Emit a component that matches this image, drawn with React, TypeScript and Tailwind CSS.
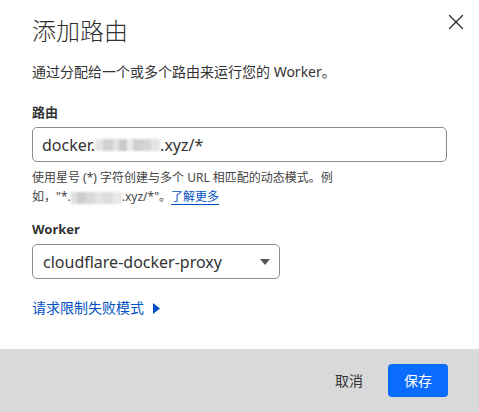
import { X } from 'lucide-react'

const font = { fontFamily: '"Noto Sans", "Noto Sans CJK SC", sans-serif' }

function Blur({ blocks }: { blocks: { w: number; c: string }[] }) {
  return (
    <span className="inline-flex align-middle h-[12px] blur-[1px]">
      {blocks.map((b, i) => (
        <span key={i} className="inline-block h-full" style={{ width: b.w, background: b.c }} />
      ))}
    </span>
  )
}

const inputBlur = [
  { w: 8, c: '#e6e6e6' },
  { w: 10, c: '#d0d0d0' },
  { w: 6, c: '#e2e2e2' },
  { w: 8, c: '#c9c9c9' },
  { w: 6, c: '#ececec' },
  { w: 10, c: '#cfcfcf' },
  { w: 8, c: '#d6d6d6' },
  { w: 9, c: '#e4e4e4' },
]

const helpBlur = [
  { w: 6, c: '#e0e0e0' },
  { w: 8, c: '#cdcdcd' },
  { w: 10, c: '#d8d8d8' },
  { w: 8, c: '#e4e4e4' },
  { w: 10, c: '#dcdcdc' },
  { w: 9, c: '#e8e8e8' },
]

export default function App() {
  return (
    <div className="w-[479px] h-[412px] bg-white flex flex-col text-[#333]" style={font}>
      <div className="relative flex-1 px-8 pt-[13px]">
        <button className="absolute right-[10px] top-[9px] text-[#222]">
          <X className="w-[26px] h-[26px]" strokeWidth={1.1} />
        </button>
        <h1 className="text-[24px] leading-[36px] font-light text-[#313131]">添加路由</h1>

        <p className="mt-[13px] text-[14px] leading-[20px]">通过分配给一个或多个路由来运行您的 Worker。</p>

        <label className="block mt-[21px] text-[13px] leading-[18px] font-bold">路由</label>
        <div className="mt-[6px] h-[35px] rounded-[5px] border border-[#8c8c8c] flex items-center px-[9px] text-[16px] text-[#333]">
          <span>docker.</span>
          <Blur blocks={inputBlur} />
          <span>.xyz/*</span>
        </div>

        <div className="mt-[6px] text-[12px] leading-[19px] text-[#444]">
          <div>使用星号 (*) 字符创建与多个 URL 相匹配的动态模式。例</div>
          <div>
            如，"*.
            <Blur blocks={helpBlur} />
            .xyz/*"。
            <a href="#" className="text-[#0051c3] underline underline-offset-[3px]">了解更多</a>
          </div>
        </div>

        <label className="block mt-[14px] text-[13px] leading-[18px] font-bold">Worker</label>
        <div className="mt-[6px] w-[248px] h-[35px] rounded-[5px] border border-[#8c8c8c] flex items-center justify-between pl-[10px] pr-[9px] text-[16px]">
          <span>cloudflare-docker-proxy</span>
          <svg width="10" height="6" viewBox="0 0 10 6">
            <path d="M0 0h10L5 6z" fill="#555" />
          </svg>
        </div>

        <button className="mt-[19px] flex items-center gap-[9px] text-[14px] leading-[20px] text-[#0051c3]">
          请求限制失败模式
          <svg width="7" height="11" viewBox="0 0 7 11">
            <path d="M0 0l7 5.5L0 11z" fill="#0051c3" />
          </svg>
        </button>
      </div>

      <div className="h-[63px] bg-[#d9d9d9] flex items-center justify-end gap-[25px] pr-[31px]">
        <button className="text-[14px] text-[#333]">取消</button>
        <button className="w-[60px] h-[33px] rounded-[4px] bg-[#0a6cff] text-white text-[14px]">保存</button>
      </div>
    </div>
  )
}
